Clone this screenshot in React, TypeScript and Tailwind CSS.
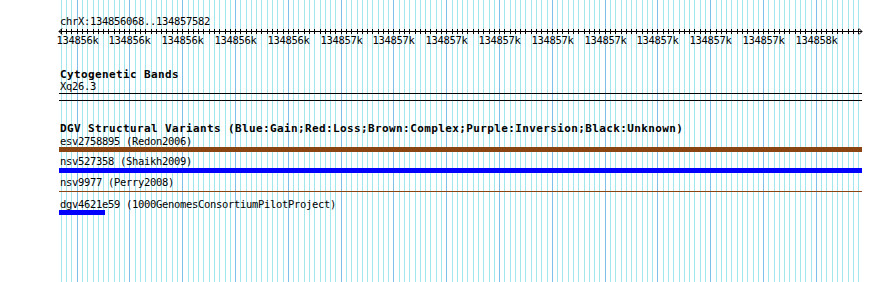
import React from "react";

const START = 134856068;
const END = 134857582;
const X0 = 59.8;
const SCALE = 0.528;

const toX = (bp: number) => Math.round(X0 + (bp - START) * SCALE);

const minorTicks: number[] = [];
for (let bp = 134856070; bp <= END; bp += 10) minorTicks.push(bp);

const majorLabels = [
  "134856k",
  "134856k",
  "134856k",
  "134856k",
  "134856k",
  "134857k",
  "134857k",
  "134857k",
  "134857k",
  "134857k",
  "134857k",
  "134857k",
  "134857k",
  "134857k",
  "134858k",
];

const mono = "font-['DejaVu_Sans_Mono',monospace]";

const Grid = () => (
  <svg className="absolute inset-0" width={890} height={282} shapeRendering="crispEdges">
    {minorTicks.map((bp) => (
      <line
        key={bp}
        x1={toX(bp) + 0.5}
        x2={toX(bp) + 0.5}
        y1={0}
        y2={282}
        stroke={bp % 100 === 0 ? "#7ec0ea" : "#a2e6ee"}
        strokeWidth={1}
      />
    ))}
  </svg>
);

const Ruler = () => (
  <svg width={890} height={22} className="-ml-[59px] block" shapeRendering="crispEdges">
    <line x1={59} x2={862} y1={5.5} y2={5.5} stroke="#000" />
    <polyline points="62,2.5 59,5.5 62,8.5" fill="none" stroke="#000" shapeRendering="auto" />
    <polyline points="859,2.5 862,5.5 859,8.5" fill="none" stroke="#000" shapeRendering="auto" />
    {minorTicks.map((bp) => (
      <line
        key={bp}
        x1={toX(bp) + 0.5}
        x2={toX(bp) + 0.5}
        y1={3}
        y2={8}
        stroke="#000"
      />
    ))}
    {majorLabels.map((label, i) => (
      <text
        key={i}
        x={toX(134856100 + i * 100) + 0.5}
        y={18}
        textAnchor="middle"
        fontFamily="DejaVu Sans Mono, monospace"
        fontSize={10.5}
        letterSpacing={-0.3}
        fill="#000"
      >
        {label}
      </text>
    ))}
  </svg>
);

const Small = ({ children, className = "" }: { children: React.ReactNode; className?: string }) => (
  <div
    className={`${mono} text-[10.5px] leading-[10px] h-[10px] tracking-[-0.32px] ml-px whitespace-nowrap ${className}`}
  >
    {children}
  </div>
);

const Title = ({ children, className = "" }: { children: React.ReactNode; className?: string }) => (
  <div
    className={`${mono} text-[11px] leading-[12px] h-[12px] font-bold tracking-[0.38px] ml-px whitespace-nowrap ${className}`}
  >
    {children}
  </div>
);

export default function App() {
  return (
    <div className="relative w-[890px] h-[282px] bg-white overflow-hidden text-black">
      <Grid />
      <div className="relative pl-[59px] pt-[16px] w-[862px]">
        <Small>chrX:134856068..134857582</Small>
        <Ruler />

        <Title className="mt-[21px]">Cytogenetic Bands</Title>
        <Small>Xq26.3</Small>
        <div className="mt-[2px] h-px bg-black" />
        <div className="mt-[6px] h-px bg-black" />

        <Title className="mt-[22px]">
          DGV Structural Variants (Blue:Gain;Red:Loss;Brown:Complex;Purple:Inversion;Black:Unknown)
        </Title>
        <Small className="mt-px">esv2758895 (Redon2006)</Small>
        <div className="mt-px h-[5px] bg-[#8b4513]" />
        <Small className="mt-[4px]">nsv527358 (Shaikh2009)</Small>
        <div className="mt-[2px] h-[5px] bg-[#0000ff]" />
        <Small className="mt-[4px]">nsv9977 (Perry2008)</Small>
        <div className="mt-[4px] h-px bg-[#8b4513]" />
        <Small className="mt-[7px]">dgv4621e59 (1000GenomesConsortiumPilotProject)</Small>
        <div className="mt-px h-[5px] w-[46px] bg-[#0000ff]" />
      </div>
    </div>
  );
}
